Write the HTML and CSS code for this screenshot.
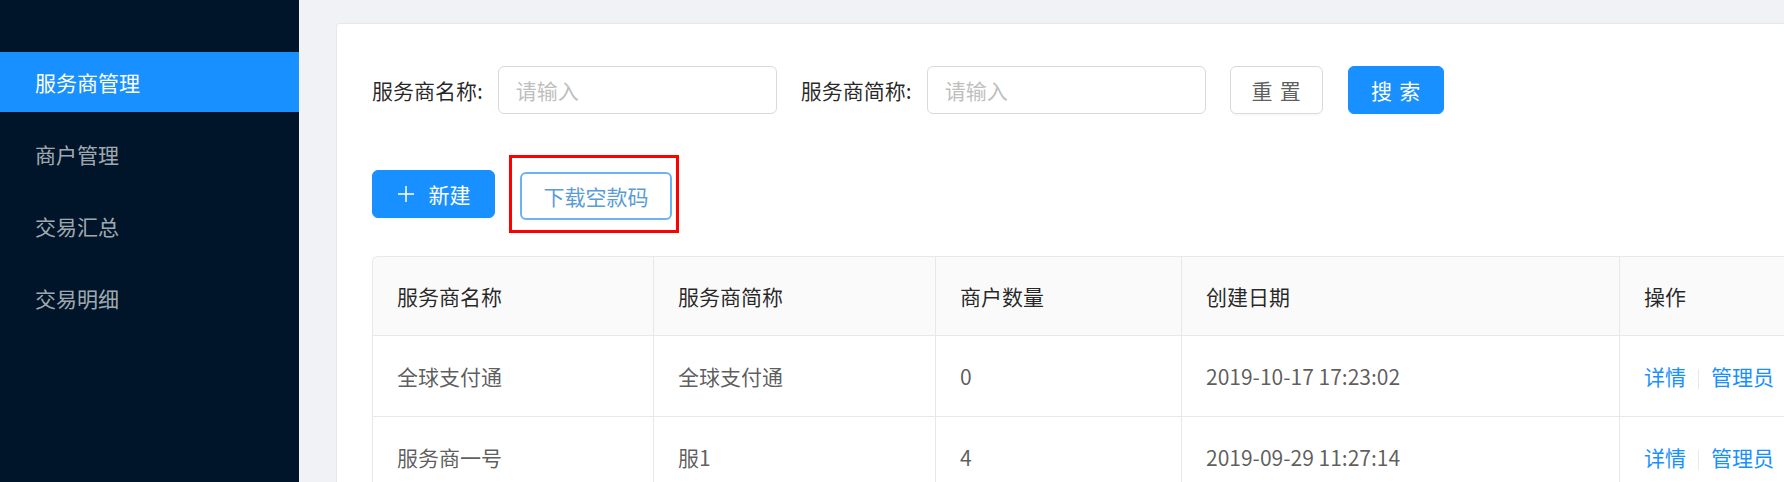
FILE: index.html
```html
<!DOCTYPE html>
<html lang="zh-CN">
<head>
<meta charset="UTF-8" />
<meta name="viewport" content="width=device-width, initial-scale=1.0">
<title>服务商管理</title>
<link rel="stylesheet" href="styles.css">
</head>
<body>
<div class="layout">
  <div class="sider">
    <ul class="menu">
      <li class="menu-item active">服务商管理</li>
      <li class="menu-item">商户管理</li>
      <li class="menu-item">交易汇总</li>
      <li class="menu-item">交易明细</li>
    </ul>
  </div>
  <div class="main">
    <div class="card">
      <div class="search-form">
        <label class="form-label">服务商名称:</label>
        <input type="text" class="form-input" placeholder="请输入">
        <label class="form-label">服务商简称:</label>
        <input type="text" class="form-input" placeholder="请输入">
        <button class="btn btn-reset">重置</button>
        <button class="btn btn-primary btn-search">搜索</button>
      </div>
      <div class="actions">
        <button class="btn btn-primary btn-new">
          <svg class="plus" width="18" height="18" viewBox="0 0 18 18"><path d="M9 1v16M1 9h16" stroke="#fff" stroke-width="1.5" fill="none"/></svg>
          新建
        </button>
        <div class="highlight">
          <button class="btn btn-download">下载空款码</button>
        </div>
      </div>
      <table class="table">
        <thead>
          <tr>
            <th class="col-name">服务商名称</th>
            <th class="col-short">服务商简称</th>
            <th class="col-count">商户数量</th>
            <th class="col-date">创建日期</th>
            <th class="col-op">操作</th>
          </tr>
        </thead>
        <tbody>
          <tr>
            <td>全球支付通</td>
            <td>全球支付通</td>
            <td>0</td>
            <td>2019-10-17 17:23:02</td>
            <td><a class="link">详情</a><span class="divider"></span><a class="link">管理员</a></td>
          </tr>
          <tr>
            <td>服务商一号</td>
            <td>服1</td>
            <td>4</td>
            <td>2019-09-29 11:27:14</td>
            <td><a class="link">详情</a><span class="divider"></span><a class="link">管理员</a></td>
          </tr>
        </tbody>
      </table>
    </div>
  </div>
</div>
</body>
</html>
```

FILE: styles.css
```css
* { box-sizing: border-box; }
body { margin: 0; font-family: "Noto Sans CJK SC", "Microsoft YaHei", sans-serif; font-size: 21px; color: rgba(0,0,0,0.65); overflow: hidden; }
.layout { display: flex; height: 100vh; overflow: hidden; }

.sider { width: 299px; flex-shrink: 0; background: #001529; padding-top: 52px; }
.menu { list-style: none; margin: 0; padding: 0; }
.menu-item { height: 60px; line-height: 60px; padding-left: 35px; margin-bottom: 12px; color: rgba(255,255,255,0.65); white-space: nowrap; }
.menu-item.active { background: #1890ff; color: #fff; }

.main { flex: 1; background: #f0f2f5; padding: 23px 0 0 37px; overflow: hidden; }
.card { width: 1700px; min-height: 600px; background: #fff; border: 1px solid #e8e8e8; border-radius: 3px; padding: 42px 0 0 35px; }

.search-form { display: flex; align-items: center; height: 48px; }
.form-label { color: rgba(0,0,0,0.85); margin-right: 15px; white-space: nowrap; }
.form-input { width: 279px; height: 48px; border: 1px solid #d9d9d9; border-radius: 6px; padding: 0 17px; font: inherit; color: rgba(0,0,0,0.65); outline: none; margin-right: 24px; }
.form-input::placeholder { color: #bfbfbf; }

.btn { height: 48px; border-radius: 6px; font: inherit; cursor: pointer; box-shadow: 0 2px 0 rgba(0,0,0,0.02); display: inline-flex; align-items: center; justify-content: center; white-space: nowrap; }
.btn-primary { background: #1890ff; border: 1px solid #1890ff; color: #fff; }
.btn-reset { width: 93px; background: #fff; border: 1px solid #d9d9d9; color: rgba(0,0,0,0.65); letter-spacing: 0.34em; padding: 0 0 0 0.34em; }
.btn-search { width: 96px; margin-left: 25px; letter-spacing: 0.34em; padding: 0 0 0 0.34em; }

.actions { display: flex; align-items: center; margin-top: 41px; }
.btn-new { width: 123px; padding: 0; gap: 14px; }
.plus { display: block; }
.highlight { border: 3px solid #ff0000; padding: 14px 4px 10px 8px; margin-left: 14px; }
.btn-download { width: 152px; background: #fff; border: 2px solid #6db2f2; color: #5b9bd8; padding: 0; }

.table { border-collapse: separate; border-spacing: 0; margin-top: 23px; table-layout: fixed; width: 1547px; border-top: 1px solid #e8e8e8; border-left: 1px solid #e8e8e8; border-radius: 6px 0 0 0; }
.table th, .table td { text-align: left; padding: 0 24px; border-right: 1px solid #e8e8e8; border-bottom: 1px solid #e8e8e8; white-space: nowrap; }
.table th { background: #fafafa; color: rgba(0,0,0,0.85); font-weight: normal; height: 79px; border-radius: 6px 0 0 0; }
.table th + th { border-radius: 0; }
.table td { height: 81px; }
.col-name { width: 281px; }
.col-short { width: 282px; }
.col-count { width: 246px; }
.col-date { width: 438px; }
.col-op { width: 300px; }
.link { color: #1890ff; cursor: pointer; }
.divider { display: inline-block; width: 1px; height: 20px; background: #e8e8e8; margin: 0 12px; vertical-align: middle; }
```
